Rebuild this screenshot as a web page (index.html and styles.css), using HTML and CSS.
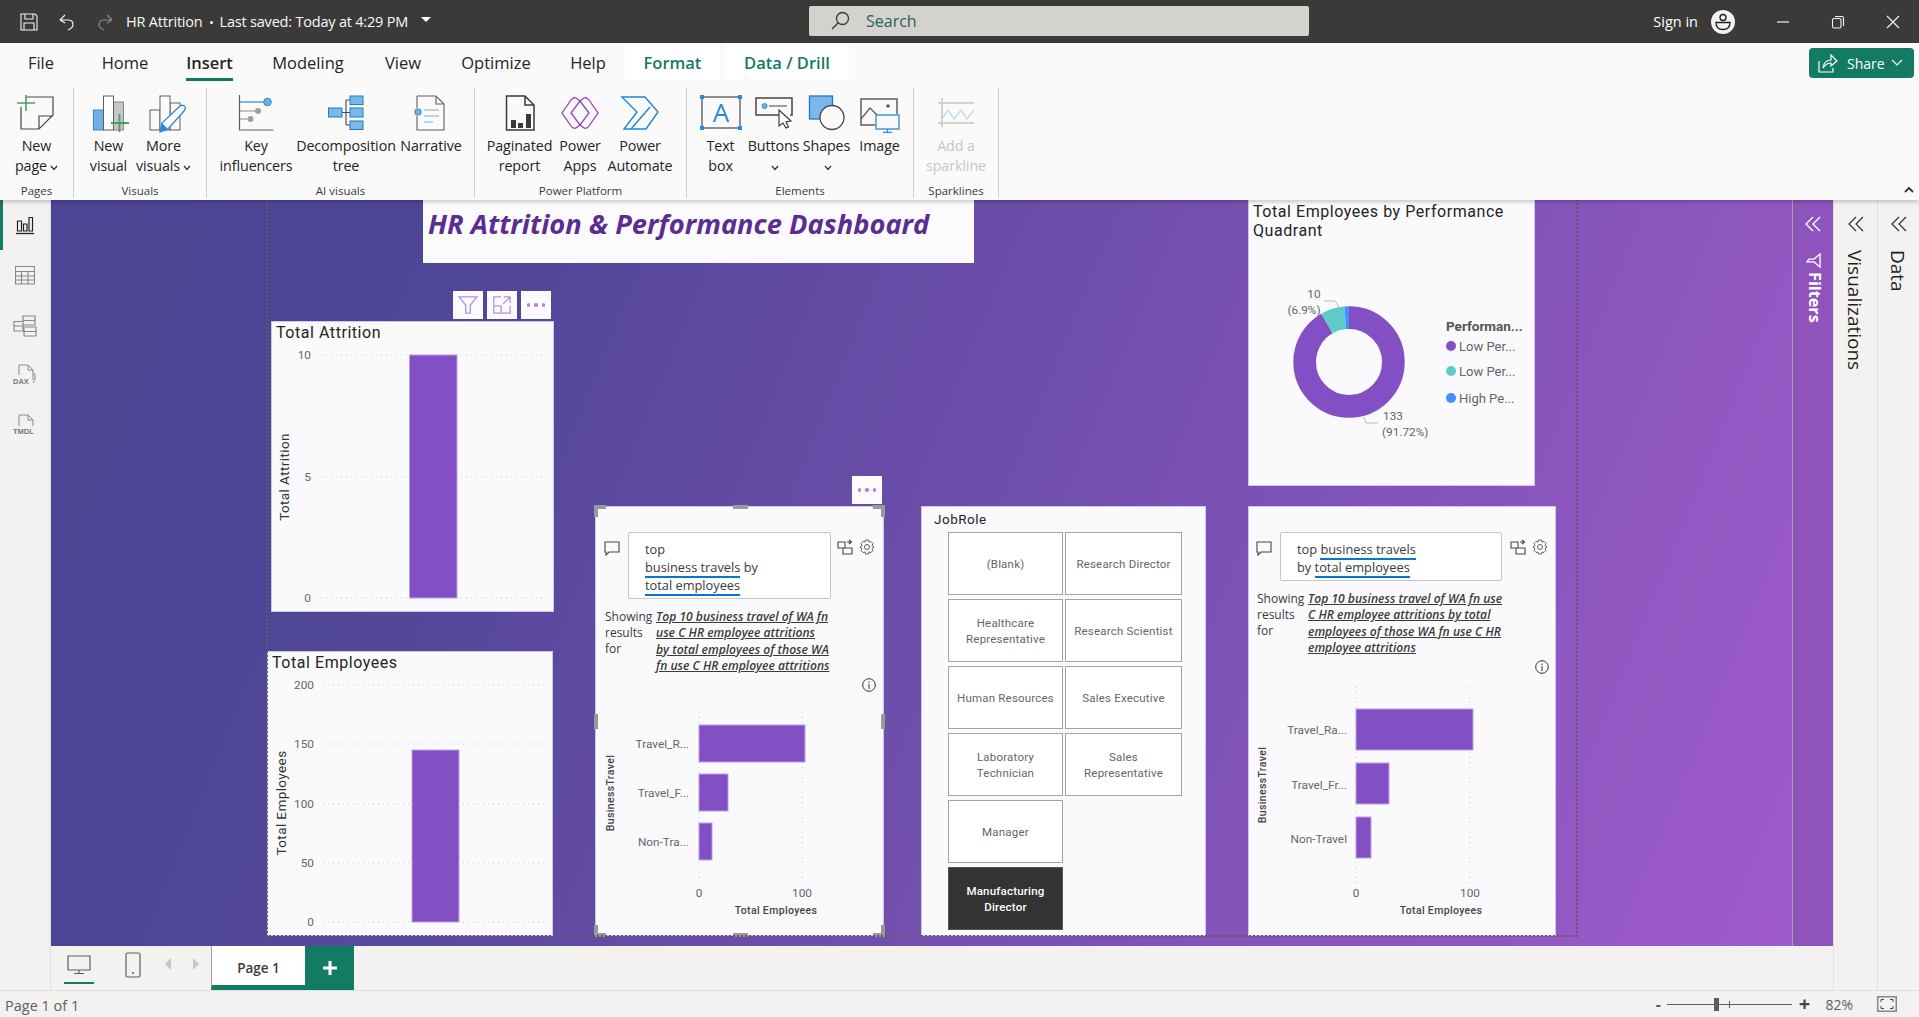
FILE: index.html
```html
<!DOCTYPE html>
<html lang="en">
<head>
<meta charset="utf-8">
<title>HR Attrition</title>
<link rel="stylesheet" href="styles.css">
</head>
<body>
<div class="app">
  <header class="titlebar">
    <div class="tb-left">
      <svg class="ic-18" viewBox="0 0 18 18"><path d="M1 1H15L17 3V17H1Z M5 1V6H13V1 M4 17V10H14V17" fill="none" stroke="#f3f2f1" stroke-width="1.1"/></svg>
      <svg class="ic-18 tb-gap" viewBox="0 0 18 18"><path d="M2 7L7 2M2 7L7 10M2 7H10Q15 7 15 11.500Q15 15 10 17" fill="none" stroke="#f3f2f1" stroke-width="1.2"/></svg>
      <svg class="ic-18 tb-gap" viewBox="0 0 18 18"><path d="M16 7L11 2M16 7L11 10M16 7H8Q3 7 3 11.500Q3 15 8 17" fill="none" stroke="#8a8886" stroke-width="1.2"/></svg>
      <span class="doc-title">HR Attrition<i class="dot"></i>Last saved: Today at 4:29 PM</span>
      <i class="caret"></i>
    </div>
    <div class="search">
      <svg class="ic-20" viewBox="0 0 20 20"><circle cx="12.500" cy="7.500" r="6" fill="none" stroke="#3b3a39" stroke-width="1.300"/><path d="M8 12L2 18" stroke="#3b3a39" stroke-width="1.500"/></svg>
      <span>Search</span>
    </div>
    <div class="tb-right">
      <span class="signin">Sign in</span>
      <svg class="avatar" viewBox="0 0 24 24"><circle cx="12" cy="12" r="12" fill="#f3f2f1"/><circle cx="12" cy="7.500" r="3" fill="none" stroke="#201f1e" stroke-width="1.300"/><path d="M5 12.500H19Q19 19.500 12 19.500Q5 19.500 5 12.500Z" fill="none" stroke="#201f1e" stroke-width="1.300"/></svg>
      <svg class="win win-min" viewBox="0 0 14 14"><path d="M1 7H13" stroke="#f3f2f1" stroke-width="1.200"/></svg>
      <svg class="win" viewBox="0 0 14 14"><rect x="1.500" y="3.500" width="8.500" height="9.500" rx="1.500" fill="none" stroke="#f3f2f1" stroke-width="1.100"/><path d="M4 1.500H11Q12.500 1.500 12.500 3V11" fill="none" stroke="#f3f2f1" stroke-width="1.100"/></svg>
      <svg class="win" viewBox="0 0 14 14"><path d="M1 1L13 13M13 1L1 13" stroke="#f3f2f1" stroke-width="1.200"/></svg>
    </div>
  </header>

  <nav class="tabs">
    <div class="tab t-file"><span>File</span></div>
    <div class="tab t-home"><span>Home</span></div>
    <div class="tab t-insert is-active"><span>Insert</span></div>
    <div class="tab t-model"><span>Modeling</span></div>
    <div class="tab t-view"><span>View</span></div>
    <div class="tab t-opt"><span>Optimize</span></div>
    <div class="tab t-help"><span>Help</span></div>
    <div class="tab t-format ctx"><span>Format</span></div>
    <div class="tab t-data ctx"><span>Data / Drill</span></div>
    <div class="share">
      <svg class="share-ic" viewBox="0 0 20 20"><path d="M1 8V19H15V15" fill="none" stroke="#fff" stroke-width="1.200"/><path d="M5 15Q6 7 13 7V2L19 8L13 13V10Q8 10 5 15Z" fill="none" stroke="#fff" stroke-width="1.200"/></svg>
      <span>Share</span>
      <svg class="share-ch" viewBox="0 0 12 8"><path d="M1 1L6 6L11 1" fill="none" stroke="#fff" stroke-width="1.200"/></svg>
    </div>
  </nav>

  <section class="ribbon">
    <div class="group g-pages">
      <div class="items">
        <div class="item i-73">
          <svg class="ric" viewBox="0 0 44 40"><path d="M12 4H38V22L24 36H6V14M24 36V23H38" fill="none" stroke="#484644" stroke-width="1.200"/><path d="M11 2V18M2 10H20" stroke="#4f9c63" stroke-width="1.600"/></svg>
          <div class="lbl">New<br>page<svg class="chev" viewBox="0 0 8 6"><path d="M1 1L4 4.500L7 1" fill="none" stroke="#323130" stroke-width="1.200"/></svg></div>
        </div>
      </div>
      <div class="g-name">Pages</div>
    </div>
    <div class="group g-visuals">
      <div class="items">
        <div class="item i-55">
          <svg class="ric" viewBox="0 0 44 40"><rect x="6.500" y="17" width="10" height="20" fill="#72b1e6" stroke="#2b88d8"/><rect x="26.500" y="9" width="10" height="28" fill="#c8c6c4" stroke="#8a8886"/><rect x="16.500" y="3" width="10" height="34" fill="#fff" stroke="#605e5c"/><path d="M32.500 21V39M24 30H42" stroke="#4f9c63" stroke-width="1.800"/></svg>
          <div class="lbl">New<br>visual</div>
        </div>
        <div class="item i-55">
          <svg class="ric" viewBox="0 0 44 40"><rect x="8" y="17" width="10" height="20" fill="none" stroke="#605e5c"/><rect x="28" y="10" width="10" height="27" fill="none" stroke="#605e5c"/><rect x="18" y="3" width="10" height="34" fill="#fafafa" stroke="#605e5c"/><path d="M18 39L20 30L38 13Q41 11 43 14Q44 16 42 18L26 36Z" fill="#fff" stroke="#2b88d8" stroke-width="1.300"/><path d="M18 39L20 30L26 36Z" fill="#2b88d8"/></svg>
          <div class="lbl">More<br>visuals<svg class="chev" viewBox="0 0 8 6"><path d="M1 1L4 4.500L7 1" fill="none" stroke="#323130" stroke-width="1.200"/></svg></div>
        </div>
      </div>
      <div class="g-name">Visuals</div>
    </div>
    <div class="group g-ai">
      <div class="items">
        <div class="item i-78">
          <svg class="ric" viewBox="0 0 44 40"><path d="M5.500 2V37H39.500" fill="none" stroke="#605e5c" stroke-width="1.200"/><path d="M5.500 9H30" stroke="#2b88d8" stroke-width="1.200"/><circle cx="33.500" cy="9" r="3.800" fill="#72b1e6" stroke="#2b88d8"/><path d="M5.500 18H21M5.500 26H13.500" stroke="#8a8886" stroke-width="1.200"/><circle cx="24" cy="18" r="3" fill="#a19f9d"/><circle cx="16.500" cy="26" r="3" fill="#a19f9d"/></svg>
          <div class="lbl">Key<br>influencers</div>
        </div>
        <div class="item i-102">
          <svg class="ric" viewBox="0 0 44 40"><path d="M18 19.500H26M22 7V32M22 7H26M22 32H26" fill="none" stroke="#484644" stroke-width="1.100"/><rect x="4.500" y="15" width="13.500" height="9" fill="#7ab8ea" stroke="#1f78c8"/><rect x="26" y="3" width="13" height="8.500" fill="#7ab8ea" stroke="#1f78c8"/><rect x="26" y="15" width="13" height="9" fill="#7ab8ea" stroke="#1f78c8"/><rect x="26" y="28" width="13" height="8.500" fill="#7ab8ea" stroke="#1f78c8"/></svg>
          <div class="lbl">Decomposition<br>tree</div>
        </div>
        <div class="item i-68">
          <svg class="ric" viewBox="0 0 44 40"><path d="M8 3H27L35 11V37H8V23M8 15V3M27 3V11H35" fill="none" stroke="#605e5c" stroke-width="1.100"/><circle cx="9" cy="19" r="3.200" fill="#72b1e6" stroke="#2b88d8"/><path d="M15 17H30M15 23H30M15 29H24" stroke="#72b1e6" stroke-width="1.200"/></svg>
          <div class="lbl">Narrative</div>
        </div>
      </div>
      <div class="g-name">AI visuals</div>
    </div>
    <div class="group g-power">
      <div class="items">
        <div class="item i-69">
          <svg class="ric" viewBox="0 0 44 40"><path d="M8.500 3H27L36 12V37H8.500ZM27 3V12H36" fill="none" stroke="#3b3a39" stroke-width="1.500"/><rect x="13" y="27" width="5" height="8" fill="#3b3a39"/><rect x="20" y="30" width="5" height="5" fill="#3b3a39"/><rect x="28" y="21" width="5" height="14" fill="#3b3a39"/></svg>
          <div class="lbl">Paginated<br>report</div>
        </div>
        <div class="item i-52">
          <svg class="ric" viewBox="0 0 44 40"><path d="M4 20L13 7Q15 4 18 5L22 8L26 5Q29 4 31 7L40 20L31 33Q29 36 26 35L22 32L18 35Q15 36 13 33Z" fill="none" stroke="#9b3fb5" stroke-width="1.300"/><path d="M22 8L31 20L22 32L13 20Z" fill="none" stroke="#9b3fb5" stroke-width="1.300"/></svg>
          <div class="lbl">Power<br>Apps</div>
        </div>
        <div class="item i-68">
          <svg class="ric" viewBox="0 0 44 40"><path d="M4 4H27L40 19L28 36H6L19 19Z" fill="none" stroke="#1f84d8" stroke-width="1.400"/><path d="M13 36L32 14" fill="none" stroke="#1f84d8" stroke-width="1.400"/></svg>
          <div class="lbl">Power<br>Automate</div>
        </div>
      </div>
      <div class="g-name">Power Platform</div>
    </div>
    <div class="group g-elements">
      <div class="items">
        <div class="item i-53">
          <svg class="ric" viewBox="0 0 44 40"><rect x="3" y="4" width="38" height="31" fill="none" stroke="#484644" stroke-width="1.200"/><rect x="1" y="2" width="4" height="4" fill="#2b88d8"/><rect x="39" y="2" width="4" height="4" fill="#2b88d8"/><rect x="1" y="33" width="4" height="4" fill="#2b88d8"/><rect x="39" y="33" width="4" height="4" fill="#2b88d8"/><text x="22" y="29" class="ic-a">A</text></svg>
          <div class="lbl">Text<br>box</div>
        </div>
        <div class="item i-53">
          <svg class="ric" viewBox="0 0 44 40"><path d="M28 22H4V5H40V22H38" fill="none" stroke="#484644" stroke-width="1.500"/><circle cx="12.500" cy="13" r="2.500" fill="#72b1e6" stroke="#2b88d8"/><path d="M17 13H35" stroke="#605e5c" stroke-width="1.200"/><path d="M27 17V33L31 30L34 35L36.500 34L34 29L39 28Z" fill="#fff" stroke="#323130" stroke-width="1.100"/></svg>
          <div class="lbl">Buttons<br><svg class="chev" viewBox="0 0 8 6"><path d="M1 1L4 4.500L7 1" fill="none" stroke="#323130" stroke-width="1.200"/></svg></div>
        </div>
        <div class="item i-53">
          <svg class="ric" viewBox="0 0 44 40"><rect x="4.500" y="3" width="23" height="23" fill="#7ab8ea" stroke="#1f78c8" stroke-width="1.300"/><circle cx="27" cy="24.500" r="12" fill="#fafafa" stroke="#484644" stroke-width="1.300"/></svg>
          <div class="lbl">Shapes<br><svg class="chev" viewBox="0 0 8 6"><path d="M1 1L4 4.500L7 1" fill="none" stroke="#323130" stroke-width="1.200"/></svg></div>
        </div>
        <div class="item i-53">
          <svg class="ric" viewBox="0 0 44 40"><path d="M17 32H3V6H39V21" fill="none" stroke="#605e5c" stroke-width="1.500"/><path d="M3 26L12 15L20 23" fill="none" stroke="#605e5c" stroke-width="1.300"/><circle cx="30" cy="13" r="1.800" fill="#605e5c"/><rect x="18" y="22" width="23" height="14" fill="#fafafa" stroke="#2b88d8" stroke-width="1.300"/><path d="M29.500 36V39M25 39.500H34" stroke="#2b88d8" stroke-width="1.300"/></svg>
          <div class="lbl">Image</div>
        </div>
      </div>
      <div class="g-name">Elements</div>
    </div>
    <div class="group g-spark">
      <div class="items">
        <div class="item i-84">
          <svg class="ric" viewBox="0 0 44 40"><path d="M8 5V34M4 10H40M4 30H40" fill="none" stroke="#c8c6c4" stroke-width="1.500"/><path d="M8 26L14 17L20 26L27 17L33 26L40 17" fill="none" stroke="#b4d3e8" stroke-width="1.200"/></svg>
          <div class="lbl dim">Add a<br>sparkline</div>
        </div>
      </div>
      <div class="g-name">Sparklines</div>
    </div>
    <svg class="collapse" viewBox="0 0 10 7"><path d="M1 6L5 2L9 6" fill="none" stroke="#323130" stroke-width="1.800"/></svg>
  </section>

  <main class="workspace">
    <aside class="rail">
      <div class="rail-btn is-active"><svg class="rail-ic" viewBox="0 0 20 20"><path d="M1 18.500H19" stroke="#201f1e" stroke-width="1.300"/><path d="M2.500 6H6.500V16H2.500ZM8.500 9H12V16H8.500ZM14 2.500H17.500V16H14Z" fill="none" stroke="#201f1e" stroke-width="1.200"/></svg></div>
      <div class="rail-btn"><svg class="rail-ic" viewBox="0 0 20 20"><path d="M.5 1.500H19.500V19H.5ZM.5 6.500H19.500M.5 11H19.500M.5 15H19.500M6.500 6.500V19M13 6.500V19" fill="none" stroke="#8a8886" stroke-width="1.100"/></svg></div>
      <div class="rail-btn"><svg class="rail-ic ic-lg" viewBox="0 0 24 24"><path d="M10 3H22V12H10ZM10 7.500H22M11 14H23V23H11ZM11 18.500H23M1 8.500H10V18H1ZM1 13H10" fill="none" stroke="#8a8886" stroke-width="1.200"/></svg></div>
      <div class="rail-btn"><svg class="rail-ic ic-lg" viewBox="0 0 24 24"><path d="M6 12V2H15L20 7V17M15 2V7H20" fill="none" stroke="#8a8886"/><path d="M21 10Q24 15 20 20" fill="none" stroke="#8a8886"/><text x="0" y="21" class="ic-tiny">DAX</text></svg></div>
      <div class="rail-btn"><svg class="rail-ic ic-lg" viewBox="0 0 24 24"><path d="M6 13V2H15L20 7V13M15 2V7H20" fill="none" stroke="#8a8886"/><text x="0" y="21" class="ic-tiny">TMDL</text></svg></div>
    </aside>

    <div class="center">
      <div class="canvas-row">
        <div class="canvas">
          <div class="visual v-heading"><h1>HR Attrition &amp; Performance Dashboard</h1></div>

          <div class="toolbar tb-attr">
            <div class="tool"><svg class="tool-ic" viewBox="0 0 22 22"><path d="M1 2H21L13.500 11V20H8.500V11Z" fill="none" stroke="#b391e0" stroke-width="1.500"/></svg></div>
            <div class="tool"><svg class="tool-ic" viewBox="0 0 22 22"><path d="M10 2H2V20H20V12M2 12H10V20M13 2H20V9M20 2L12 10" fill="none" stroke="#b391e0" stroke-width="1.400"/></svg></div>
            <div class="tool"><span class="dots"><i></i><i></i><i></i></span></div>
          </div>

          <article class="visual card v-attr">
            <div class="card-title">Total Attrition</div>
            <svg class="plot" width="281" height="267" viewBox="0 0 281 267">
              <path class="grid" d="M49 11H275.500M49 133H275.500M49 254H275.500"/>
              <rect class="bar" x="137.500" y="11" width="47.500" height="243"/>
              <text class="tick e" x="39" y="11">10</text><text class="tick e" x="39" y="133">5</text><text class="tick e" x="39" y="254">0</text>
              <text class="ax-y" transform="rotate(-90 12 133)" x="12" y="133">Total Attrition</text>
            </svg>
          </article>

          <article class="visual card v-emp">
            <div class="card-title">Total Employees</div>
            <svg class="plot" width="284" height="261" viewBox="0 0 284 261">
              <path class="grid" d="M55 11H277M55 70H277M55 130H277M55 189H277M55 248H277"/>
              <rect class="bar" x="144" y="76" width="47" height="172"/>
              <text class="tick e" x="46" y="11">200</text><text class="tick e" x="46" y="70">150</text><text class="tick e" x="46" y="130">100</text><text class="tick e" x="46" y="189">50</text><text class="tick e" x="46" y="248">0</text>
              <text class="ax-y" transform="rotate(-90 13 129)" x="13" y="129">Total Employees</text>
            </svg>
          </article>

          <div class="toolbar tb-qa"><div class="tool"><span class="dots"><i></i><i></i><i></i></span></div></div>

          <article class="visual card v-qa1">
            <div class="qa-head">
              <svg class="qa-ic qa-bubble" viewBox="0 0 16 16"><path d="M1 2H15V12H5L2 15V12H1Z" fill="none" stroke="#484644" stroke-width="1.100"/></svg>
              <div class="qa-input in-1">top<br><span class="u">business travels</span> by<br><span class="u">total employees</span></div>
              <svg class="qa-ic qa-swap" viewBox="0 0 16 16"><path d="M1 3H8V9H1ZM6 9H15V15H6V9M10 3H14M12 1L14.500 3L12 5" fill="none" stroke="#484644" stroke-width="1.100"/></svg>
              <svg class="qa-ic qa-gear" viewBox="0 0 16 16"><circle cx="8" cy="8" r="2.500" fill="none" stroke="#605e5c"/><path d="M6.500 1H9.500L10 3L12 2.500L14 4.500L13 6.500L15 8L13 9.500L14 11.500L12 13.500L10 13L9.500 15H6.500L6 13L4 13.500L2 11.500L3 9.500L1 8L3 6.500L2 4.500L4 2.500L6 3Z" fill="none" stroke="#605e5c"/></svg>
            </div>
            <div class="qa-res pad-1">
              <div class="res-l">Showing<br>results<br>for</div>
              <div class="res-t">Top 10 business travel of WA fn<br>use C HR employee attritions<br>by total employees of those WA<br>fn use C HR employee attritions</div>
            </div>
            <svg class="qa-info r-1" viewBox="0 0 14 14"><circle cx="7" cy="7" r="6.300" fill="none" stroke="#323130"/><path d="M7 6V11M7 3.500V5" stroke="#323130"/></svg>
            <svg class="plot" width="287" height="243" viewBox="0 0 287 243">
              <path class="grid" d="M103 15V190M206 15V190"/>
              <rect class="bar" x="103" y="33" width="106" height="37"/><rect class="bar" x="103" y="82" width="29" height="37"/><rect class="bar" x="103" y="131" width="13" height="37"/>
              <text class="tick e" x="93" y="52">Travel_R...</text><text class="tick e" x="93" y="101">Travel_F...</text><text class="tick e" x="93" y="150">Non-Tra...</text>
              <text class="tick m" x="103" y="201">0</text><text class="tick m" x="206" y="201">100</text>
              <text class="ax-s" x="180" y="218">Total Employees</text>
              <text class="ax-s" transform="rotate(-90 14 101)" x="14" y="101">BusinessTravel</text>
            </svg>
            <i class="h h-tl"></i><i class="h h-tr"></i><i class="h h-bl"></i><i class="h h-br"></i><i class="h h-t"></i><i class="h h-b"></i><i class="h h-l"></i><i class="h h-r"></i>
          </article>

          <article class="visual card v-job">
            <div class="job-title">JobRole</div>
            <div class="slicer">
              <div class="sl">(Blank)</div><div class="sl">Research Director</div>
              <div class="sl">Healthcare Representative</div><div class="sl">Research Scientist</div>
              <div class="sl">Human Resources</div><div class="sl">Sales Executive</div>
              <div class="sl">Laboratory Technician</div><div class="sl">Sales Representative</div>
              <div class="sl">Manager</div><div class="sl-empty"></div>
              <div class="sl is-on">Manufacturing Director</div>
            </div>
          </article>

          <article class="visual card v-qa2">
            <div class="qa-head">
              <svg class="qa-ic qa-bubble" viewBox="0 0 16 16"><path d="M1 2H15V12H5L2 15V12H1Z" fill="none" stroke="#484644" stroke-width="1.100"/></svg>
              <div class="qa-input in-2">top <span class="u">business travels</span><br>by <span class="u">total employees</span></div>
              <svg class="qa-ic qa-swap s-2" viewBox="0 0 16 16"><path d="M1 3H8V9H1ZM6 9H15V15H6V9M10 3H14M12 1L14.500 3L12 5" fill="none" stroke="#484644" stroke-width="1.100"/></svg>
              <svg class="qa-ic qa-gear" viewBox="0 0 16 16"><circle cx="8" cy="8" r="2.500" fill="none" stroke="#605e5c"/><path d="M6.500 1H9.500L10 3L12 2.500L14 4.500L13 6.500L15 8L13 9.500L14 11.500L12 13.500L10 13L9.500 15H6.500L6 13L4 13.500L2 11.500L3 9.500L1 8L3 6.500L2 4.500L4 2.500L6 3Z" fill="none" stroke="#605e5c"/></svg>
            </div>
            <div class="qa-res pad-2">
              <div class="res-l">Showing<br>results<br>for</div>
              <div class="res-t">Top 10 business travel of WA fn use<br>C HR employee attritions by total<br>employees of those WA fn use C HR<br>employee attritions</div>
            </div>
            <svg class="qa-info r-2" viewBox="0 0 14 14"><circle cx="7" cy="7" r="6.300" fill="none" stroke="#323130"/><path d="M7 6V11M7 3.500V5" stroke="#323130"/></svg>
            <svg class="plot" width="306" height="261" viewBox="0 0 306 261">
              <path class="grid" d="M107 13V209M221 13V209"/>
              <rect class="bar" x="107" y="35" width="117" height="41"/><rect class="bar" x="107" y="89" width="33" height="41"/><rect class="bar" x="107" y="143" width="15" height="41"/>
              <text class="tick e" x="98" y="56">Travel_Ra...</text><text class="tick e" x="98" y="111">Travel_Fr...</text><text class="tick e" x="98" y="165">Non-Travel</text>
              <text class="tick m" x="107" y="219">0</text><text class="tick m" x="221" y="219">100</text>
              <text class="ax-s" x="192" y="236">Total Employees</text>
              <text class="ax-s" transform="rotate(-90 13 111)" x="13" y="111">BusinessTravel</text>
            </svg>
          </article>

          <article class="visual card v-donut">
            <div class="donut-title">Total Employees by Performance<br>Quadrant</div>
            <svg class="plot" width="285" height="245" viewBox="0 0 285 245">
              <g transform="rotate(-90 100 122)">
                <circle cx="100" cy="122" r="44.350" pathLength="100" fill="none" stroke="#8250c4" stroke-width="22.700" stroke-dasharray="91.720 100"/>
                <circle cx="100" cy="122" r="44.350" pathLength="100" fill="none" stroke="#5ecbc8" stroke-width="22.700" stroke-dasharray="6.900 100" stroke-dashoffset="-91.720"/>
                <circle cx="100" cy="122" r="44.350" pathLength="100" fill="none" stroke="#438fff" stroke-width="22.700" stroke-dasharray="1.380 100" stroke-dashoffset="-98.620"/>
              </g>
              <path class="leader" d="M75 61H86L90 67M115 177L117 183H129"/>
              <text class="tick m" x="65" y="54">10</text><text class="tick m" x="55" y="70">(6.9%)</text>
              <text class="tick" x="134" y="176">133</text><text class="tick" x="133" y="192">(91.72%)</text>
              <text class="lg-t" x="197" y="86">Performan...</text>
              <circle cx="202" cy="106" r="5" fill="#8250c4"/><circle cx="202" cy="131" r="5" fill="#5ecbc8"/><circle cx="202" cy="158" r="5" fill="#438fff"/>
              <text class="lg" x="210" y="106">Low Per...</text><text class="lg" x="210" y="131">Low Per...</text><text class="lg" x="210" y="158">High Pe...</text>
            </svg>
          </article>

          <div class="page-frame"></div>
        </div>
        <aside class="filters">
          <svg class="dbl" viewBox="0 0 16 16"><path d="M8 1L1 8L8 15M15 1L8 8L15 15" fill="none" stroke="#fff" stroke-width="1.400"/></svg>
          <svg class="pane-fn" viewBox="0 0 16 16"><path d="M1 1H15L9.500 7.500V15L6.500 13V7.500Z" fill="none" stroke="#fff" stroke-width="1.400"/></svg>
          <span class="pane-t t-filters">Filters</span>
        </aside>
      </div>
      <div class="pagebar">
        <div class="pb-left">
          <div class="view-d"><svg class="pb-ic" viewBox="0 0 24 20"><path d="M1 1H23V15H1ZM12 15V18M7 18.500H17" fill="none" stroke="#605e5c" stroke-width="1.200"/></svg></div>
          <svg class="pb-ph" viewBox="0 0 16 26"><rect x="1" y="1" width="14" height="24" rx="1.500" fill="none" stroke="#605e5c" stroke-width="1.200"/><path d="M7 21H9" stroke="#605e5c" stroke-width="1.500"/></svg>
          <i class="arr arr-l"></i><i class="arr arr-r"></i>
        </div>
        <div class="page-tab">Page 1</div>
        <div class="page-add"><svg class="plus" viewBox="0 0 14 14"><path d="M7 0V14M0 7H14" stroke="#fff" stroke-width="3"/></svg></div>
      </div>
    </div>

    <aside class="pane">
      <svg class="dbl" viewBox="0 0 16 16"><path d="M8 1L1 8L8 15M15 1L8 8L15 15" fill="none" stroke="#323130" stroke-width="1.200"/></svg>
      <span class="pane-t">Visualizations</span>
    </aside>
    <aside class="pane">
      <svg class="dbl" viewBox="0 0 16 16"><path d="M8 1L1 8L8 15M15 1L8 8L15 15" fill="none" stroke="#323130" stroke-width="1.200"/></svg>
      <span class="pane-t">Data</span>
    </aside>
  </main>

  <footer class="status">
    <span class="st-page">Page 1 of 1</span>
    <div class="zoom">
      <span class="z-b">-</span>
      <div class="track"><i class="thumb"></i><i class="tick-m"></i></div>
      <span class="z-b z-p">+</span>
      <span class="z-v">82%</span>
      <svg class="fit" viewBox="0 0 20 16"><rect x=".75" y=".75" width="18.500" height="14.500" fill="none" stroke="#8a8886" stroke-width="1.500"/><path d="M4 6V3.500H7M13 3.500H16V6M16 10V12.500H13M7 12.500H4V10" fill="none" stroke="#484644"/></svg>
    </div>
  </footer>
</div>
</body>
</html>
```

FILE: styles.css
```css
* { box-sizing: border-box; }
html, body { margin: 0; padding: 0; width: 1919px; height: 1017px; overflow: hidden; }
body { font-family: "Open Sans", "Noto Sans", sans-serif; color: #252423; background: #f3f2f1; }
.app { display: flex; flex-direction: column; width: 1919px; height: 1017px; }
svg { display: block; flex: none; }

/* title bar */
.titlebar { display: grid; grid-template-columns: 809px 500px 1fr; height: 43px; background: #3b3a39; color: #fff; align-items: center; flex: none; }
.tb-left { display: flex; align-items: center; padding-left: 20px; }
.ic-18 { width: 18px; height: 18px; }
.tb-gap { margin-left: 20px; }
.doc-title { margin-left: 12px; font-size: 14.500px; letter-spacing: -.2px; white-space: nowrap; color: #f8f8f8; }
.dot { display: inline-block; width: 3px; height: 3px; background: #fff; border-radius: 50%; margin: 0 7px 3px 7px; }
.caret { width: 0; height: 0; margin-left: 13px; margin-bottom: 4px; border: 5px solid transparent; border-top: 5px solid #fff; border-bottom: 0; }
.search { display: flex; align-items: center; height: 30px; margin-top: -1px; background: #d3d2cf; border-radius: 2px; padding-left: 21px; color: #2a6358; font-size: 16px; gap: 16px; }
.ic-20 { width: 20px; height: 20px; }
.tb-right { display: flex; align-items: center; justify-content: flex-end; padding-right: 19px; }
.signin { font-size: 14.500px; color: #fff; }
.avatar { width: 24px; height: 24px; margin-left: 13px; }
.win { width: 14px; height: 14px; margin-left: 41px; }

/* tabs */
.tabs { display: flex; height: 38px; background: #fafafa; flex: none; }
.tab { display: flex; justify-content: center; padding-top: 9px; font-size: 16.500px; line-height: 22px; color: #252423; }
.tab span { display: block; height: 29px; padding-bottom: 4px; }
.t-file { width: 82px; } .t-home { width: 86px; } .t-insert { width: 83px; } .t-model { width: 114px; }
.t-view { width: 76px; } .t-opt { width: 110px; } .t-help { width: 74px; }
.t-format { width: 95px; } .t-data { width: 124px; margin-left: 5px; }
.ctx { background: #fff; color: #137a64; font-weight: 600; }
.is-active span { font-weight: 600; border-bottom: 3px solid #137a64; }
.share { display: flex; align-items: center; margin: 5px 5px 3px auto; width: 105px; height: 30px; background: #137a64; border-radius: 4px; color: #fff; font-size: 14px; padding-left: 9px; }
.share-ic { width: 20px; height: 20px; margin-right: 9px; }
.share-ch { width: 12px; height: 8px; margin-left: 6px; }

/* ribbon */
.ribbon { position: relative; z-index: 2; display: flex; height: 119px; padding-top: 7px; background: #fafafa; box-shadow: 0 2px 4px rgba(0,0,0,.2); flex: none; }
.group { display: flex; flex-direction: column; height: 110px; border-right: 1px solid #d2d0ce; flex: none; }
.g-pages { width: 74px; } .g-visuals { width: 133px; } .g-ai { width: 268px; } .g-power { width: 212px; } .g-elements { width: 227px; } .g-spark { width: 85px; }
.items { display: flex; height: 96px; flex: none; }
.g-visuals .items, .g-elements .items { padding-left: 7px; }
.g-ai .items, .g-power .items { padding-left: 10px; }
.item { display: flex; flex-direction: column; align-items: center; flex: none; padding-top: 5px; }
.i-52 { width: 52px; } .i-53 { width: 53px; } .i-55 { width: 55px; } .i-68 { width: 68px; } .i-69 { width: 69px; } .i-73 { width: 73px; } .i-78 { width: 78px; } .i-84 { width: 84px; } .i-102 { width: 102px; }
.ric { width: 44px; height: 40px; }
.ic-a { font-family: "Open Sans", sans-serif; font-size: 26px; fill: #2b88d8; text-anchor: middle; }
.lbl { margin-top: 3px; font-size: 14.300px; line-height: 20px; text-align: center; color: #252423; white-space: nowrap; letter-spacing: -.1px; }
.lbl.dim { color: #c8c6c4; }
.chev { display: inline-block; width: 8px; height: 6px; margin-left: 3px; }
.g-name { font-size: 11.500px; line-height: 14px; text-align: center; color: #3b3a39; white-space: nowrap; }
.collapse { position: absolute; right: 5px; bottom: 7px; width: 10px; height: 7px; }

/* workspace */
.workspace { display: flex; height: 790px; flex: none; }
.rail { width: 51px; flex: none; background: #f3f2f1; border-right: 1px solid #e1dfdd; }
.rail-btn { display: flex; align-items: center; justify-content: center; height: 50px; width: 50px; }
.rail-btn.is-active { border-left: 3px solid #137a64; padding-right: 3px; }
.rail-ic { width: 20px; height: 20px; }
.ic-lg { width: 24px; height: 24px; }
.ic-tiny { font-family: "Liberation Sans", sans-serif; font-size: 7.500px; font-weight: 700; fill: #7a7876; }
.center { width: 1782px; display: flex; flex-direction: column; flex: none; }
.canvas-row { display: flex; height: 746px; flex: none; }
.canvas { position: relative; width: 1741px; flex: none; overflow: hidden; background: linear-gradient(112deg, #4b4594 0%, #4c4595 18%, #a05bcb 100%); }
.filters { width: 41px; flex: none; display: flex; flex-direction: column; align-items: center; background: #8e53bc; border-left: 1px solid #a8a3a8; color: #fff; padding-top: 16px; }
.dbl { width: 16px; height: 16px; }
.pane-fn { width: 15px; height: 15px; margin-top: 21px; transform: rotate(90deg); }
.pane-t { writing-mode: vertical-rl; font-size: 15.500px; line-height: 20px; margin-top: 10px; }
.t-filters { font-weight: 700; margin-top: 4px; font-size: 16.200px; margin-left: 3px; }
.pane { width: 44px; flex: none; display: flex; flex-direction: column; align-items: center; padding-top: 16px; background: #f3f2f1; border-left: 1px solid #e1dfdd; color: #201f1e; }
.pane + .pane { width: 42px; }
.pane .pane-t { margin-top: 18px; font-size: 19px; margin-right: 2px; }

/* visuals on the report canvas */
.visual { position: absolute; background: #fafafd; }
.card { border: 1px solid #cfc6ea; display: flex; flex-direction: column; }
.v-heading { left: 372px; top: 0; width: 551px; height: 63px; background: #fbfbfe; padding: 9px 0 0 5px; }
.v-heading h1 { margin: 0; font-size: 27.300px; line-height: 30px; font-weight: 700; font-style: italic; color: #5c2d91; white-space: nowrap; }
.v-attr { left: 220px; top: 121px; width: 283px; height: 291px; }
.v-emp { left: 216px; top: 451px; width: 286px; height: 285px; }
.v-qa1 { left: 544px; top: 306px; width: 289px; height: 430px; }
.v-job { left: 870px; top: 306px; width: 285px; height: 430px; }
.v-qa2 { left: 1197px; top: 306px; width: 308px; height: 430px; }
.v-donut { left: 1197px; top: 0; width: 287px; height: 286px; border-top: 0; }
.page-frame { position: absolute; left: 215px; top: -4px; width: 1312px; height: 741px; border: 2px dotted #5f5a66; pointer-events: none; }
.card-title, .job-title, .donut-title { font-family: Roboto, sans-serif; font-size: 16px; letter-spacing: .55px; color: #252423; white-space: nowrap; }
.card-title { height: 22px; line-height: 22px; padding-left: 4px; flex: none; }
.job-title { height: 25px; line-height: 25px; padding-left: 12px; font-size: 13.500px; letter-spacing: .5px; flex: none; }
.donut-title { height: 40px; padding: 2px 0 0 4px; line-height: 19px; flex: none; }

.toolbar { position: absolute; display: flex; gap: 4px; }
.tb-attr { left: 402px; top: 91px; }
.tb-qa { left: 801px; top: 276px; }
.tool { display: flex; align-items: center; justify-content: center; width: 30px; height: 28px; background: #fbfbfe; }
.tool-ic { width: 20px; height: 20px; }
.dots { display: flex; gap: 4px; }
.dots i { width: 3.500px; height: 3.500px; border-radius: 50%; background: #b57be6; }

/* chart svg */
.grid { fill: none; stroke: #c8c6c4; stroke-width: 1; stroke-dasharray: 1 4; }
.bar { fill: #8250c4; stroke: #b9a2e2; stroke-width: 1; }
.leader { fill: none; stroke: #bdbbb9; stroke-width: 1; }
.plot text { font-family: Roboto, sans-serif; dominant-baseline: central; }
.tick { font-size: 11.800px; fill: #666; }
.tick.e { text-anchor: end; }
.tick.m { text-anchor: middle; }
.ax-y { font-size: 13.500px; fill: #333; text-anchor: middle; letter-spacing: .4px; }
.ax-s { font-size: 10.500px; fill: #444; text-anchor: middle; letter-spacing: .35px; font-weight: 500; }
.lg-t { font-size: 13.500px; fill: #555; font-weight: 700; }
.lg { font-size: 13px; fill: #666; }

/* Q&A */
.qa-head { display: flex; align-items: flex-start; margin-top: 25px; padding-left: 8px; flex: none; }
.v-qa2 .qa-head { padding-left: 7px; }
.qa-ic { width: 16px; height: 16px; }
.qa-bubble { margin: 8px 8px 0 0; }
.qa-swap { margin: 7px 0 0 6px; }
.qa-swap.s-2 { margin-left: 8px; }
.qa-gear { margin: 7px 0 0 6px; }
.qa-input { border: 1px solid #c8c6c4; border-radius: 2px; background: #fff; padding: 7px 0 0 16px; font-size: 12.800px; line-height: 18px; color: #3b3a39; white-space: nowrap; }
.in-1 { width: 203px; height: 67px; }
.in-2 { width: 222px; height: 49px; }
.u { border-bottom: 2px solid #0078d4; }
.qa-res { display: flex; margin-top: 10px; flex: none; }
.pad-1 { padding-left: 9px; }
.pad-2 { padding-left: 8px; }
.res-l { width: 51px; flex: none; font-size: 12px; line-height: 16px; color: #3b3a39; }
.res-t { font-size: 12.100px; line-height: 16.400px; font-style: italic; font-weight: 600; color: #3b3a39; text-decoration: underline; white-space: nowrap; }
.qa-info { width: 14px; height: 14px; margin-top: 3px; align-self: flex-end; flex: none; }
.r-1 { margin-right: 7px; }
.r-2 { margin-right: 6px; }

/* selection handles */
.h { position: absolute; background: #999; }
.h-t, .h-b { left: 137px; width: 15px; height: 4px; }
.h-t { top: -2px; } .h-b { bottom: -2px; }
.h-l, .h-r { top: 207px; width: 4px; height: 15px; }
.h-l { left: -2px; } .h-r { right: -2px; }
.h-tl, .h-tr, .h-bl, .h-br { width: 12px; height: 12px; background: none; border: 0 solid #999; }
.h-tl { left: -2px; top: -2px; border-width: 4px 0 0 4px; }
.h-tr { right: -2px; top: -2px; border-width: 4px 4px 0 0; }
.h-bl { left: -2px; bottom: -2px; border-width: 0 0 4px 4px; }
.h-br { right: -2px; bottom: -2px; border-width: 0 4px 4px 0; }

/* slicer */
.slicer { display: grid; grid-template-columns: 115px 117px; grid-auto-rows: 63px; column-gap: 2px; row-gap: 4px; margin-left: 26px; }
.sl { display: flex; align-items: center; justify-content: center; text-align: center; background: #fff; border: 1.500px solid #a3a3a3; font-family: Roboto, sans-serif; font-size: 11.500px; line-height: 16px; letter-spacing: .2px; color: #666; padding: 0 8px; }
.sl.is-on { background: #333; color: #fff; border-color: #555; font-weight: 500; }

/* page bar */
.pagebar { display: flex; height: 44px; background: #f3f2f1; flex: none; }
.pb-left { display: flex; align-items: flex-start; width: 160px; padding-left: 13px; flex: none; }
.view-d { width: 30px; height: 38px; padding: 9px 3px 0; border-bottom: 2px solid #137a64; flex: none; }
.pb-ic { width: 24px; height: 20px; }
.pb-ph { width: 16px; height: 26px; margin: 6px 0 0 31px; }
.arr { width: 0; height: 0; border: 6px solid transparent; margin-top: 12px; }
.arr-l { border-right: 6px solid #c8c6c4; border-left: 0; margin-left: 24px; }
.arr-r { border-left: 6px solid #c8c6c4; border-right: 0; margin-left: 22px; }
.page-tab { width: 94px; background: #fff; border-left: 1px solid #a19f9d; border-bottom: 5px solid #137a64; display: flex; align-items: center; justify-content: center; padding-top: 4px; font-size: 13.500px; font-weight: 600; color: #3b3a39; flex: none; }
.page-add { width: 49px; background: #137a64; display: flex; align-items: center; justify-content: center; flex: none; }
.plus { width: 14px; height: 14px; }

/* status bar */
.status { display: flex; align-items: center; height: 27px; background: #f3f2f1; border-top: 1px solid #e1dfdd; flex: none; }
.st-page { padding: 3px 0 0 5px; font-size: 14.500px; color: #605e5c; }
.zoom { display: flex; align-items: center; margin-left: auto; padding-right: 22px; color: #605e5c; }
.z-b { width: 12px; text-align: center; font-size: 16px; font-weight: 700; line-height: 16px; }
.z-p { width: 12px; margin-left: 6px; color: #484644; font-size: 20px; }
.track { position: relative; width: 125px; height: 1px; margin-left: 3px; background: #605e5c; }
.thumb { position: absolute; left: 47px; top: -6px; width: 5px; height: 13px; background: #605e5c; }
.tick-m { position: absolute; left: 62px; top: -3px; width: 1px; height: 7px; background: #605e5c; }
.z-v { margin-left: 15px; font-size: 14px; }
.fit { width: 20px; height: 16px; margin-left: 24px; }
```
